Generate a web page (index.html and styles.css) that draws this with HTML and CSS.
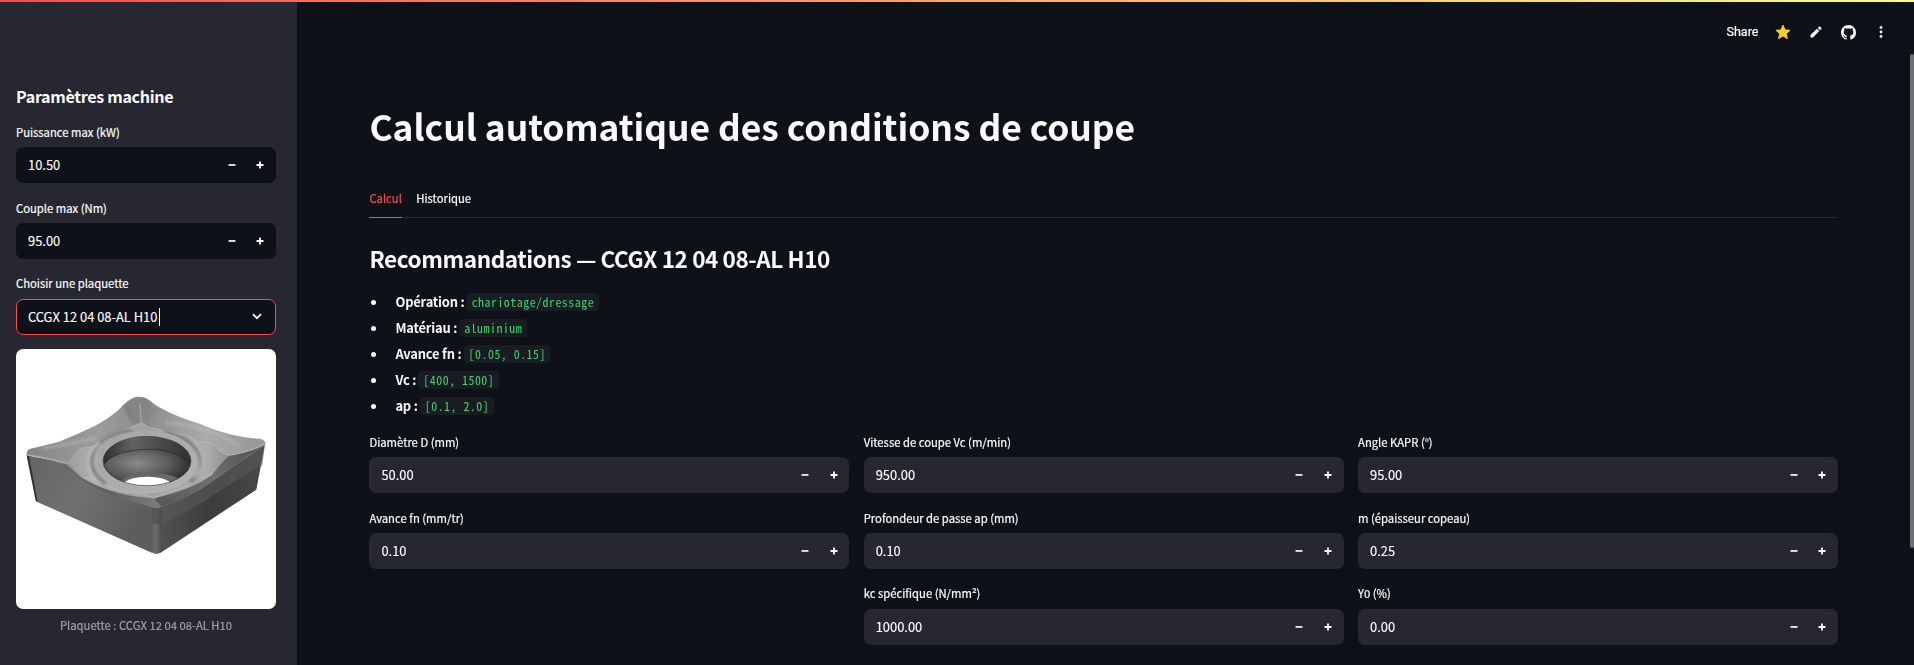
FILE: index.html
```html
<!DOCTYPE html>
<html lang="fr">
<head>
<meta charset="utf-8">
<title>Calcul automatique des conditions de coupe</title>
<link rel="stylesheet" href="styles.css">
</head>
<body>
<svg width="0" height="0" class="defs">
  <symbol id="minus" viewBox="0 0 8 8"><path d="M0.5 3.1h7v1.7h-7z"/></symbol>
  <symbol id="plus" viewBox="0 0 8 8"><path d="M3.1 .5h1.8v2.6h2.6v1.8H4.9v2.6H3.1V4.9H.5V3.1h2.6z"/></symbol>
</svg>
<div class="decoration"></div>
<div class="scrollbar"></div>
<div class="app">
  <aside class="sidebar">
    <h2 class="side-title">Paramètres machine</h2>
    <div class="stack">
      <div class="field"><label>Puissance max (kW)</label><div class="input"><span>10.50</span><i><svg><use href="#minus"/></svg></i><i><svg><use href="#plus"/></svg></i></div></div>
      <div class="field"><label>Couple max (Nm)</label><div class="input"><span>95.00</span><i><svg><use href="#minus"/></svg></i><i><svg><use href="#plus"/></svg></i></div></div>
      <div class="field"><label>Choisir une plaquette</label><div class="input select"><span class="picked">CCGX 12 04 08-AL H10</span><b class="caret"></b><svg class="chevron" viewBox="0 0 10 7"><path d="M1 1.2l4 4 4-4" fill="none" stroke="#fafafa" stroke-width="1.8"/></svg></div></div>
      <figure class="insert">
        <svg class="photo" viewBox="48 27 780 780">
          <defs>
            <linearGradient id="top" x1="0" y1="0" x2="1" y2="0"><stop offset="0" stop-color="#858585"/><stop offset=".3" stop-color="#9c9c9c"/><stop offset=".5" stop-color="#8c8c8c"/><stop offset=".75" stop-color="#ababab"/><stop offset="1" stop-color="#959595"/></linearGradient>
            <linearGradient id="left" x1="0" y1="0" x2="1" y2=".4"><stop offset="0" stop-color="#646464"/><stop offset=".5" stop-color="#717171"/><stop offset="1" stop-color="#5c5c5c"/></linearGradient>
            <linearGradient id="right" x1="0" y1="0" x2="1" y2="0"><stop offset="0" stop-color="#545454"/><stop offset=".5" stop-color="#3c3c3c"/><stop offset="1" stop-color="#484848"/></linearGradient>
            <linearGradient id="edge" x1="0" y1="0" x2="1" y2="0"><stop offset="0" stop-color="#606060"/><stop offset=".4" stop-color="#6d6d6d"/><stop offset="1" stop-color="#4a4a4a"/></linearGradient>
            <linearGradient id="bevelL" x1="0" y1="0" x2="1" y2="0"><stop offset="0" stop-color="#8a8a8a"/><stop offset=".2" stop-color="#6a6a6a"/><stop offset=".6" stop-color="#5f5f5f"/><stop offset="1" stop-color="#7c7c7c"/></linearGradient>
            <linearGradient id="bevelR" x1="0" y1="1" x2="1" y2="0"><stop offset="0" stop-color="#555"/><stop offset=".5" stop-color="#707070"/><stop offset="1" stop-color="#505050"/></linearGradient>
            <linearGradient id="land" x1="0" y1="0" x2="1" y2="0"><stop offset="0" stop-color="#9b9b9b"/><stop offset=".15" stop-color="#b0b0b0"/><stop offset=".5" stop-color="#a0a0a0"/><stop offset=".85" stop-color="#adadad"/><stop offset="1" stop-color="#8e8e8e"/></linearGradient>
            <linearGradient id="ring" x1="0" y1="0" x2="1" y2="1"><stop offset="0" stop-color="#a4a4a4"/><stop offset="1" stop-color="#b4b4b4"/></linearGradient>
            <linearGradient id="bore" x1="0" y1="0" x2="1" y2="0"><stop offset="0" stop-color="#2d2d2d"/><stop offset=".35" stop-color="#626262"/><stop offset=".65" stop-color="#4a4a4a"/><stop offset="1" stop-color="#303030"/></linearGradient>
            <radialGradient id="cone" cx=".4" cy=".35" r=".6"><stop offset="0" stop-color="#8a8a8a"/><stop offset=".6" stop-color="#5a5a5a"/><stop offset="1" stop-color="#303030"/></radialGradient>
            <clipPath id="hole"><ellipse cx="441" cy="363" rx="132" ry="74"/></clipPath>
            <filter id="soft" x="-20%" y="-20%" width="140%" height="140%"><feGaussianBlur stdDeviation="4"/></filter>
          </defs>
          <path fill="url(#left)" d="M80 346L192 368L260 412L340 450L456 490L456 636L462 641L110 485Z"/>
          <path fill="#303030" d="M80 346L87 349L113 486L107 482Z"/>
          <path fill="url(#right)" d="M470 480L600 430L690 360L796 305L769 449L482 638L462 641Z"/>
          <path fill="#595959" opacity=".6" d="M484 490L600 430L700 360L796 305L787 376C690 425 590 510 482 553Z"/>
          <path fill="url(#edge)" d="M456 498C464 504 478 504 485 498L486 560L480 638C474 643 463 642 456 636Z"/>
          <path fill="#505050" opacity=".7" d="M456 500L485 500L485 553L456 550Z"/>
          <path fill="url(#top)" d="M80 342C80 329 89 325 105 323L178 305C250 275 325 245 366 199C385 181 397 171 413 170C439 169 447 180 462 192C500 216 548 236 595 250C660 279 730 295 778 296C793 298 798 307 795 316C710 370 650 415 600 448C555 473 510 494 484 500C475 505 464 504 455 500C390 480 310 459 249 417C210 382 170 358 80 346Z"/>
          <path fill="url(#bevelL)" d="M80 344C130 358 175 372 196 371C220 391 236 409 250 416C325 461 410 472 459 474L484 500C475 505 464 504 455 500C390 484 310 463 249 422C205 386 165 362 80 346Z"/>
          <path fill="url(#bevelR)" d="M795 314C710 370 650 415 600 448C555 473 510 494 484 500L460 474C530 460 595 436 637 404C652 384 675 355 690 346C725 340 763 333 795 314Z"/>
          <path fill="#818181" opacity=".65" d="M366 199L397 253L420 248L462 192C439 169 394 166 366 199Z"/>
          <g fill="none" stroke-linecap="round" filter="url(#soft)"><path stroke="#c3c3c3" stroke-width="7" opacity=".6" d="M130 325Q220 310 283 295M500 250Q610 250 720 319"/><path stroke="#777" stroke-width="6" opacity=".65" d="M380 200L405 239M463 204L438 242"/></g>
          <path fill="url(#land)" d="M205 370C225 347 235 323 257 322L279 321C292 313 300 298 318 290C350 273 387 269 410 255L426 248L443 260C485 274 535 277 561 287C580 294 584 306 601 306C617 307 626 307 638 314C657 327 665 341 688 346C669 359 655 381 637 399C600 425 540 455 463 475C390 470 310 450 251 414C234 406 224 382 205 370Z"/>
          <g fill="none" stroke="#c4c4c4" stroke-width="2.5"><path d="M205 370C225 347 235 323 257 322L279 321C292 313 300 298 318 290C350 273 387 269 410 255L426 248L443 260C485 274 535 277 561 287C580 294 584 306 601 306C617 307 626 307 638 314C657 327 665 341 688 346" opacity=".7"/><path d="M251 414C284 418 299 420 319 435C362 461 435 458 463 475C490 457 524 455 563 438C587 414 614 417 637 399" opacity=".75"/><path stroke="#b8b8b8" d="M419 190L424 247M82 344Q145 353 203 370M690 346Q750 336 794 310"/></g>
          <g fill="none" filter="url(#soft)"><path stroke="#777" stroke-width="9" d="M318 431C276 406 263 364 286 326C306 293 350 274 396 272M490 277C551 286 596 318 603 357C608 390 595 412 570 426"/><path stroke="#c5c5c5" stroke-width="5" d="M297 427C253 391 257 339 298 309M581 305C613 340 620 381 586 413"/></g>
          <ellipse cx="440" cy="366" rx="151" ry="95" fill="url(#ring)"/>
          <g clip-path="url(#hole)"><path fill="url(#bore)" d="M305 285H576V440H305Z"/><path fill="url(#cone)" d="M308 383C328 343 380 326 446 328C505 330 555 348 572 382V445H308Z"/><path fill="none" stroke="#252525" stroke-width="3" opacity=".65" d="M316 366C357 322 506 309 567 365"/><path fill="#676767" d="M358 424C390 398 466 387 537 415L526 446H357Z"/><ellipse cx="442" cy="438" rx="76" ry="28" fill="#fff"/></g>
          <ellipse cx="441" cy="363" rx="132" ry="74" fill="none" stroke="#353535" stroke-width="1.5"/>
        </svg>
        <figcaption>Plaquette : CCGX 12 04 08-AL H10</figcaption>
      </figure>
    </div>
  </aside>
  <div class="page">
    <header class="toolbar">
      <span class="share">Share</span>
      <svg class="star" viewBox="0 0 16 16"><path fill="#ffcb2d" stroke="#ffcb2d" stroke-linejoin="round" d="M8 1.2l2 4.7 5.1.4-3.9 3.3 1.2 5L8 11.9l-4.4 2.7 1.2-5L.9 6.3 6 5.9z"/></svg>
      <svg class="pencil" viewBox="0 0 12 12"><path fill="#fafafa" d="M.5 11.5V9.1L6.9 2.7l2.4 2.4-6.4 6.4zM7.7 1.9L8.8.8q.7-.6 1.4 0l1 1q.6.7 0 1.4l-1.1 1.1z"/></svg>
      <svg class="github" viewBox="0 0 16 16"><path fill="#fafafa" d="M8 0C3.58 0 0 3.58 0 8c0 3.54 2.29 6.53 5.47 7.59.4.07.55-.17.55-.38 0-.19-.01-.82-.01-1.49-2.01.37-2.53-.49-2.69-.94-.09-.23-.48-.94-.82-1.13-.28-.15-.68-.52-.01-.53.63-.01 1.08.58 1.23.82.72 1.21 1.87.87 2.33.66.07-.52.28-.87.51-1.07-1.78-.2-3.64-.89-3.64-3.95 0-.87.31-1.59.82-2.15-.08-.2-.36-1.02.08-2.12 0 0 .67-.21 2.2.82.64-.18 1.32-.27 2-.27s1.36.09 2 .27c1.53-1.04 2.2-.82 2.2-.82.44 1.1.16 1.92.08 2.12.51.56.82 1.27.82 2.15 0 3.07-1.87 3.75-3.65 3.95.29.25.54.73.54 1.48 0 1.07-.01 1.93-.01 2.2 0 .21.15.46.55.38A8.01 8.01 0 0016 8c0-4.42-3.58-8-8-8z"/></svg>
      <svg class="dots" viewBox="0 0 4 12"><circle cx="2" cy="1.5" r="1.4"/><circle cx="2" cy="6" r="1.4"/><circle cx="2" cy="10.5" r="1.4"/></svg>
    </header>
    <main>
      <h1>Calcul automatique des conditions de coupe</h1>
      <nav class="tabs"><a class="active">Calcul</a><a>Historique</a></nav>
      <h2 class="reco">Recommandations — CCGX 12 04 08-AL H10</h2>
      <ul class="specs">
        <li><strong>Opération :</strong><code>chariotage/dressage</code></li>
        <li><strong>Matériau :</strong><code>aluminium</code></li>
        <li><strong>Avance fn :</strong><code>[0.05, 0.15]</code></li>
        <li><strong>Vc :</strong><code>[400, 1500]</code></li>
        <li><strong>ap :</strong><code>[0.1, 2.0]</code></li>
      </ul>
      <div class="grid">
        <div class="field"><label>Diamètre D (mm)</label><div class="input"><span>50.00</span><i><svg><use href="#minus"/></svg></i><i><svg><use href="#plus"/></svg></i></div></div>
        <div class="field"><label>Vitesse de coupe Vc (m/min)</label><div class="input"><span>950.00</span><i><svg><use href="#minus"/></svg></i><i><svg><use href="#plus"/></svg></i></div></div>
        <div class="field"><label>Angle KAPR (°)</label><div class="input"><span>95.00</span><i><svg><use href="#minus"/></svg></i><i><svg><use href="#plus"/></svg></i></div></div>
        <div class="field"><label>Avance fn (mm/tr)</label><div class="input"><span>0.10</span><i><svg><use href="#minus"/></svg></i><i><svg><use href="#plus"/></svg></i></div></div>
        <div class="field"><label>Profondeur de passe ap (mm)</label><div class="input"><span>0.10</span><i><svg><use href="#minus"/></svg></i><i><svg><use href="#plus"/></svg></i></div></div>
        <div class="field"><label>m (épaisseur copeau)</label><div class="input"><span>0.25</span><i><svg><use href="#minus"/></svg></i><i><svg><use href="#plus"/></svg></i></div></div>
        <div class="field second"><label>kc spécifique (N/mm²)</label><div class="input"><span>1000.00</span><i><svg><use href="#minus"/></svg></i><i><svg><use href="#plus"/></svg></i></div></div>
        <div class="field"><label>Y0 (%)</label><div class="input"><span>0.00</span><i><svg><use href="#minus"/></svg></i><i><svg><use href="#plus"/></svg></i></div></div>
      </div>
    </main>
  </div>
</div>
</body>
</html>
```
FILE: styles.css
```css
* { box-sizing: border-box; }
html, body { height: 100%; overflow: hidden; }
body {
  margin: 0;
  background: #0e1117;
  color: #fafafa;
  font-family: "Noto Sans CJK SC", "Open Sans", sans-serif;
  font-size: 12.9px;
}
h1, h2, ul, figure { margin: 0; padding: 0; }
.defs { position: absolute; }
.decoration {
  position: absolute;
  top: 0; left: 0; right: 0;
  height: 2px;
  background: linear-gradient(90deg, #ff4b4b, #fffd80);
}
.scrollbar {
  position: absolute;
  top: 54px; right: 0;
  width: 4px; height: 494px;
  border-radius: 2px;
  background: #6e7073;
}
.app { display: flex; height: 100%; }
.sidebar {
  flex: none;
  width: 297px;
  padding: 83px 21px 0 16px;
  background: #262730;
}
.side-title { height: 39.2px; font-size: 16.1px; line-height: 27px; font-weight: 700; letter-spacing: -0.33px; white-space: nowrap; }
.stack { display: flex; flex-direction: column; gap: 14.4px; }
.field label {
  display: block;
  height: 21.6px;
  margin-bottom: 3.6px;
  font-size: 11.28px;
  line-height: 21.6px;
  white-space: nowrap;
  -webkit-text-stroke: 0.2px;
}
.sidebar .field label { line-height: 20.6px; }
.input {
  display: flex;
  align-items: center;
  height: 36px;
  padding-left: 12px;
  border-radius: 7.2px;
  background: #262730;
  line-height: 36px;
  -webkit-text-stroke: 0.15px;
}
.sidebar .input { background: #0e1117; }
.input span { flex: 1; }
.input i { display: flex; justify-content: center; width: 28.8px; }
.input svg { width: 8px; height: 8px; fill: #fafafa; }
.input i:last-child { margin-right: 1.2px; }
.sidebar .select { padding-left: 11px; border: 1px solid #ff4b4b; }
.input .picked { flex: none; }
.caret { width: 1px; height: 18px; margin: 0 auto 0 2px; background: #fafafa; }
.select .chevron { width: 10px; height: 7px; margin-right: 13px; }
.photo { display: block; width: 260px; height: 260px; border-radius: 7.2px; background: #fff; }
figcaption { padding-top: 5px; text-align: center; color: #a3a3a7; font-size: 11.28px; line-height: 22px; -webkit-text-stroke: 0.15px; }
.page { flex: 1; }
.toolbar {
  display: flex;
  align-items: center;
  justify-content: flex-end;
  height: 54px;
  padding: 10px 31px 0 0;
}
.share { margin-right: 16.5px; font: 12.6px/20px Roboto, sans-serif; -webkit-text-stroke: 0.2px; }
.star { width: 16px; height: 16px; margin-right: 19px; }
.pencil { width: 12px; height: 12px; margin-right: 19px; }
.github { width: 15px; height: 15px; margin-right: 23px; }
.dots { width: 4px; height: 12px; fill: #fafafa; }
main { padding: 46px 76px 0 72.4px; }
h1 { height: 81px; font-size: 35.4px; line-height: 52px; font-weight: 700; letter-spacing: -0.04px; white-space: nowrap; }
.tabs { display: flex; gap: 14.4px; height: 37px; border-bottom: 1px solid #262730; font-size: 11.28px; line-height: 34px; -webkit-text-stroke: 0.2px; }
.tabs a { height: 37px; }
.tabs .active { color: #ff4b4b; border-bottom: 1px solid #ff4b4b; }
.reco { height: 71px; padding-top: 22px; font-size: 22.56px; line-height: 36px; font-weight: 700; letter-spacing: -0.43px; white-space: nowrap; }
.specs { list-style: none; height: 143.3px; }
.specs li { display: flex; align-items: center; height: 26px; }
.specs strong { letter-spacing: -0.17px; line-height: 24px; padding-bottom: 1px; }
.specs li::before { content: ""; width: 5px; height: 5px; margin: 0 19px 0 2px; border-radius: 50%; background: #fafafa; }
.specs code {
  margin-left: 2px;
  padding: 0 4.5px 0 5px;
  height: 18px;
  border-radius: 3.6px;
  background: #1a1c24;
  color: #3dd56d;
  font: 11.9px/18px "Noto Sans Mono CJK SC", "DejaVu Sans Mono", monospace;
  letter-spacing: 0.5px;
  white-space: pre;
}
.grid { display: grid; grid-template-columns: repeat(3, 1fr); gap: 14.4px; }
.second { grid-column: 2; }
```
